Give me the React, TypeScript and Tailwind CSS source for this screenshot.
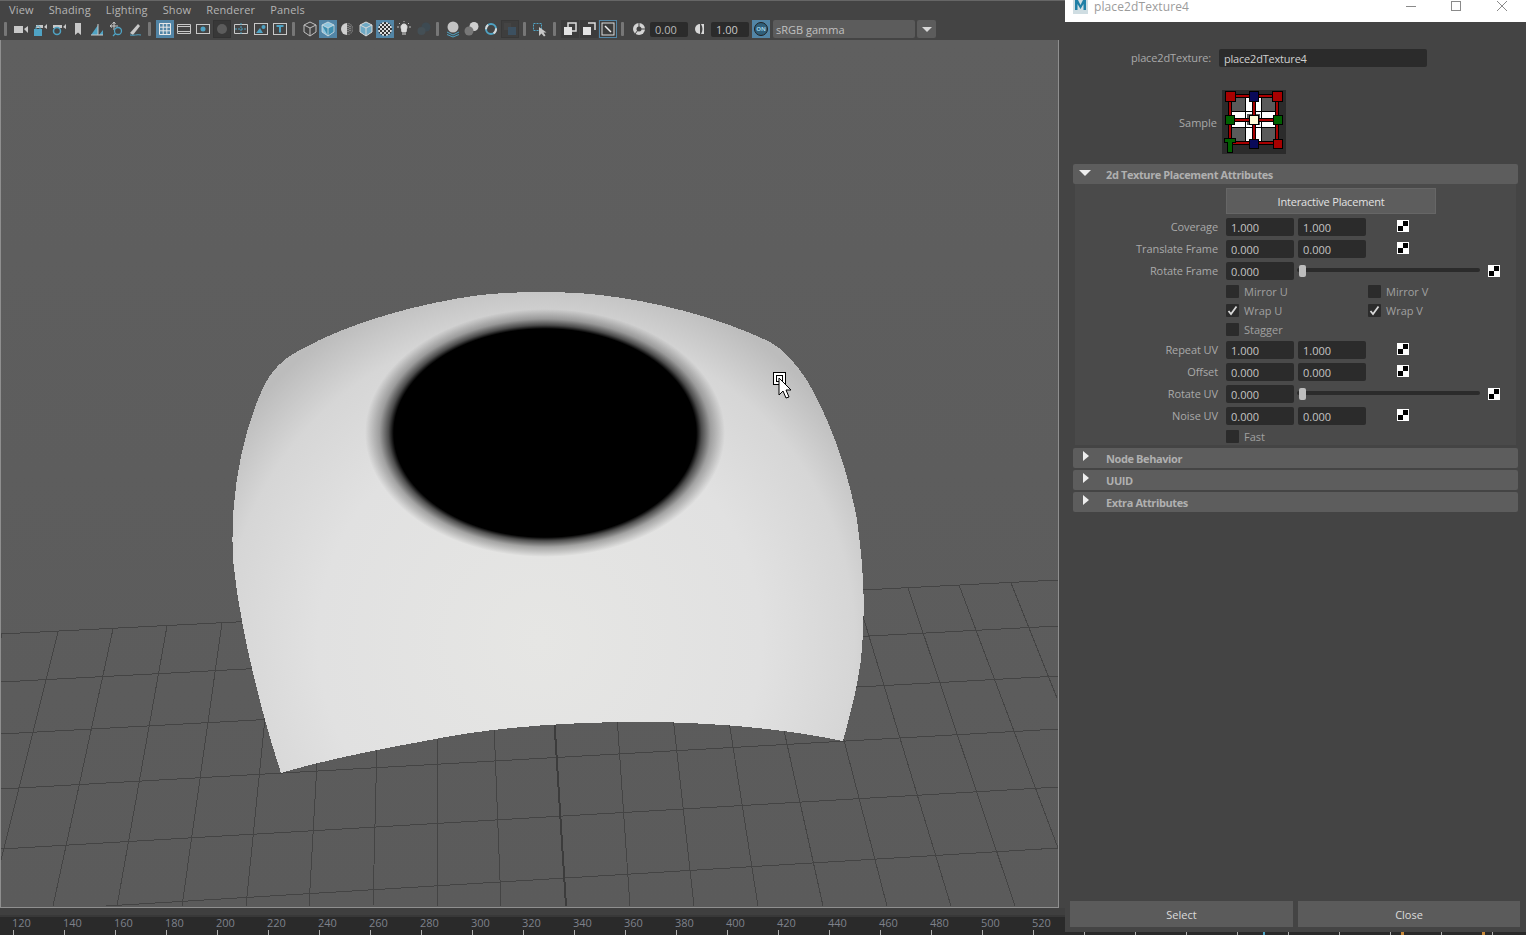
import React from "react";

const menus = ["View", "Shading", "Lighting", "Show", "Renderer", "Panels"];
const frames = Array.from({ length: 30 }, (_, i) => 120 + i * 20);

// grid lines read off the viewport: x1 y1 x2 y2
const gridLines = [
  [1, 634, 1058, 580], [1, 682, 1058, 626], [1, 734, 1058, 676], [1, 789, 1058, 729],
  [1, 849, 1058, 787], [106, 906, 1058, 848],
  [2, 634, 1, 638], [58, 632, 1, 860], [113, 629, 53, 906], [167, 626, 117, 906],
  [222, 623, 182, 906], [275, 620, 246, 906], [325, 620, 309, 906], [380, 620, 373, 906],
  [437, 620, 437, 906], [490, 620, 501, 906], [609, 600, 630, 906], [660, 600, 694, 906],
  [710, 600, 758, 906], [755, 600, 823, 906], [805, 590, 887, 906], [855, 590, 951, 906],
  [908, 588, 1015, 906], [959, 585, 1058, 848], [1011, 583, 1057, 698],
];

const Sep = ({ className }: { className: string }) => (
  <div className={`w-[3px] h-[14px] bg-[#777] rounded-[1px] shrink-0 ${className}`} />
);

const Tool = ({ className = "", children }: { className?: string; children: React.ReactNode }) => (
  <div className={`w-[18px] h-[18px] shrink-0 flex items-center justify-center ${className}`}>
    <svg width="18" height="18" viewBox="0 0 18 18" fill="none" className="shrink-0">{children}</svg>
  </div>
);

const Checker = ({ className = "" }: { className?: string }) => (
  <svg width="12" height="12" viewBox="0 0 12 12" className={`shrink-0 ${className}`}>
    <rect width="12" height="12" fill="#fff" />
    <rect x="6" y="1" width="5" height="5" fill="#000" />
    <rect x="1" y="6" width="5" height="5" fill="#000" />
  </svg>
);

const Field = ({ value, className = "" }: { value: string; className?: string }) => (
  <div className={`w-[68px] h-[18px] bg-[#2b2b2b] rounded-[2px] pl-[5px] pt-[1px] text-[#c4c4c4] leading-[18px] shrink-0 ${className}`}>
    {value}
  </div>
);

const Label = ({ text }: { text: string }) => (
  <div className="w-[143px] text-right text-[#a9a9a9] leading-[17px] tracking-[-0.08px] shrink-0">{text}</div>
);

const PairRow = ({ label, a, b, className = "" }: { label: string; a: string; b: string; className?: string }) => (
  <div className={`flex h-[18px] ${className}`}>
    <Label text={label} />
    <Field value={a} className="ml-[8px]" />
    <Field value={b} className="ml-[4px]" />
    <Checker className="ml-[31px] mt-[2px]" />
  </div>
);

const SliderRow = ({ label, value, className = "" }: { label: string; value: string; className?: string }) => (
  <div className={`flex h-[18px] ${className}`}>
    <Label text={label} />
    <Field value={value} className="ml-[8px]" />
    <div className="relative ml-[3px] mt-[6px] w-[183px] h-[4px] bg-[#2b2b2b] rounded-[2px] shrink-0">
      <div className="absolute left-[2px] top-[-3px] w-[7px] h-[12px] bg-[#bdbdbd] rounded-[2px]" />
    </div>
    <Checker className="ml-[8px] mt-[3px]" />
  </div>
);

const Check = ({ label, on, className = "" }: { label: string; on?: boolean; className?: string }) => (
  <div className={`flex items-center h-[13px] ${className}`}>
    <div className="w-[13px] h-[13px] bg-[#2b2b2b] rounded-[1px] shrink-0 flex items-center justify-center">
      {on && (
        <svg width="11" height="11" viewBox="0 0 11 11" fill="none">
          <path d="M1.5 6 L4 9 L9.5 1.5" stroke="#d8d8d8" strokeWidth="1.8" />
        </svg>
      )}
    </div>
    <span className="ml-[5px] text-[#a0a0a0] leading-[13px]">{label}</span>
  </div>
);

const Header = ({ title, open, className = "" }: { title: string; open?: boolean; className?: string }) => (
  <div className={`relative h-[20px] bg-[#5d5d5d] rounded-[2px] flex items-center pl-[33px] font-bold text-[#b0b0b0] tracking-[-0.4px] ${className}`}>
    {open ? (
      <div className="absolute left-[6px] top-[6px] w-0 h-0 border-l-[6.5px] border-r-[6.5px] border-t-[6px] border-l-transparent border-r-transparent border-t-[#eeeeee]" />
    ) : (
      <div className="absolute left-[10px] top-[3px] w-0 h-0 border-t-[5.5px] border-b-[5.5px] border-l-[6px] border-t-transparent border-b-transparent border-l-[#eeeeee]" />
    )}
    <span className="mt-[2px]">{title}</span>
  </div>
);

const Sample = () => (
  <svg width="64" height="64" viewBox="0 0 64 64" className="ml-[5px] shrink-0" shapeRendering="crispEdges">
    <rect width="64" height="64" fill="#2b2b2b" />
    <rect x="8" y="6" width="47" height="47" fill="#5a5a5a" />
    <rect x="23" y="7" width="17" height="45" fill="#fff" />
    <rect x="9" y="21" width="45" height="17" fill="#fff" />
    <rect x="25" y="24" width="13" height="11" fill="#5a5a5a" />
    <path d="M23.5 7V52M39.5 7V52M9 21.5H54M9 37.5H54" stroke="#000" />
    <path d="M8 6H55V53H8ZM31.5 6V53M8 29.5H55" stroke="#000" strokeWidth="4" fill="none" />
    <path d="M8 6H55V53H8ZM31.5 6V53M8 29.5H55" stroke="#a80000" strokeWidth="2" fill="none" />
    <rect x="3.5" y="1.5" width="10" height="10" fill="#a80000" stroke="#000" />
    <rect x="27" y="1.5" width="9" height="10" fill="#0a0a5a" stroke="#000" />
    <rect x="50.5" y="1.5" width="10" height="10" fill="#a80000" stroke="#000" />
    <rect x="3.5" y="25" width="9" height="9" fill="#006000" stroke="#000" />
    <rect x="27" y="25.5" width="9" height="9" fill="#fffbd8" stroke="#000" />
    <rect x="51" y="25" width="9" height="9" fill="#006000" stroke="#000" />
    <rect x="51" y="49" width="9" height="9" fill="#a80000" stroke="#000" />
    <rect x="27" y="49" width="9" height="9" fill="#0a0a5a" stroke="#000" />
    <path d="M2.5 48.5H13.5V52.5H10.5V62.5H5.5V52.5H2.5Z" fill="#006000" stroke="#000" />
  </svg>
);

const Viewport = () => (
  <svg width="1057" height="867" viewBox="1 40 1057 867" className="block">
    <defs>
      <linearGradient id="bg" x1="0" y1="0" x2="0" y2="1">
        <stop offset="0" stopColor="#5f5f5f" />
        <stop offset="1" stopColor="#5b5b5b" />
      </linearGradient>
      <radialGradient id="mesh" gradientUnits="userSpaceOnUse" cx="540" cy="640" r="370">
        <stop offset="0" stopColor="#e6e6e4" />
        <stop offset="0.6" stopColor="#e1e1e1" />
        <stop offset="0.85" stopColor="#d6d6d6" />
        <stop offset="1" stopColor="#bcbcbc" />
      </radialGradient>
      <radialGradient id="pupil">
        <stop offset="0" stopColor="#000" />
        <stop offset="0.84" stopColor="#000" />
        <stop offset="0.87" stopColor="#000" stopOpacity="0.65" />
        <stop offset="0.92" stopColor="#000" stopOpacity="0.28" />
        <stop offset="1" stopColor="#000" stopOpacity="0" />
      </radialGradient>
    </defs>
    <rect x="1" y="40" width="1057" height="867" fill="url(#bg)" />
    <g shapeRendering="crispEdges">
      {gridLines.map((l, i) => (
        <line key={i} x1={l[0]} y1={l[1]} x2={l[2]} y2={l[3]} stroke="#444" strokeWidth="1" />
      ))}
      <line x1="548" y1="620" x2="566" y2="906" stroke="#3c3c3c" strokeWidth="2" />
      <path
        d="M281 773 C262 715 240 630 233 560 C230 500 240 440 262 390 C272 368 285 358 300 350 C350 322 420 303 480 295 C520 291 565 291 600 295 C660 302 720 318 770 342 C785 350 797 365 808 382 C830 420 848 470 857 520 C864 570 866 610 861 660 C857 690 850 715 843 741 C790 730 720 722 640 722 C560 722 490 728 430 740 C375 750 325 760 281 773Z"
        fill="url(#mesh)"
      />
    </g>
    <ellipse cx="545" cy="433" rx="180" ry="124" fill="url(#pupil)" />
    <rect x="773.5" y="372.5" width="12" height="12" fill="#fff" stroke="#000" />
    <rect x="776.5" y="375.5" width="6" height="6" fill="#fff" stroke="#000" />
    <path d="M779 378 V395 L783 391 L786 398 L789 397 L786 390 L791 390 Z" fill="#fff" stroke="#000" />
  </svg>
);

const App: React.FC = () => {
  return (
    <div className="relative w-[1526px] h-[935px] overflow-hidden bg-[#444444] font-['Open_Sans',sans-serif] text-[11px]">
      <div className="h-[1px] bg-[#666]" />
      <div className="flex h-[19px] items-center pl-[9px] gap-[15px] text-[#b4b4b4] tracking-[0.15px]">
        {menus.map((m) => (
          <span key={m}>{m}</span>
        ))}
      </div>
      {/* toolbar */}
      <div className="flex h-[20px] items-center pb-[2px]">
        <Sep className="ml-[4px]" />
        <Tool className="ml-[5px]"><path d="M2 6H11V13H2ZM12 9L16 6V13Z" fill="#c8c8c8" /></Tool>
        <Tool className="ml-[1px]"><path d="M5 5H12V8H5ZM13 7L16 4V9Z" fill="#c8c8c8" /><rect x="3" y="9" width="8" height="7" fill="#4fa3c4" /><path d="M5 9V7.5C5 5.5 9 5.5 9 7.5V9" stroke="#4fa3c4" /></Tool>
        <Tool className="ml-[1px]"><path d="M3 5H12V8H3ZM13 7L16 4V9Z" fill="#c8c8c8" /><circle cx="7" cy="11" r="3.5" stroke="#4fa3c4" strokeWidth="1.5" /></Tool>
        <Tool className="ml-[1px]"><path d="M6 3H12V15L9 12.5L6 15Z" fill="#c8c8c8" /></Tool>
        <Tool className="ml-[1px]"><path d="M3 15L10 5V15ZM11 15L15 10V15Z" fill="#4fa3c4" /><path d="M3 15H15M10 4V15" stroke="#c8c8c8" /></Tool>
        <Tool className="ml-[1px]"><path d="M7 2V10M3 6H11M7 2L5.5 4M7 2L8.5 4M3 6L5 4.5M3 6L5 7.5" stroke="#c8c8c8" /><circle cx="11" cy="11" r="3.5" stroke="#4fa3c4" strokeWidth="1.3" /><path d="M8.5 13.5L6 16" stroke="#4fa3c4" strokeWidth="1.3" /></Tool>
        <Tool className="ml-[1px]"><path d="M4 13L12 4L14 6L7 15Z" fill="#c8c8c8" /><path d="M4 15C8 16 11 14 15 15" stroke="#4fa3c4" /></Tool>
        <Sep className="ml-[4px]" />
        <Tool className="ml-[5px] bg-[#5285a6]"><path d="M3.5 3.5H14.5V14.5H3.5ZM7.2 3.5V14.5M10.8 3.5V14.5M3.5 7.2H14.5M3.5 10.8H14.5" stroke="#e8e8e8" /></Tool>
        <Tool className="ml-[1px]"><path d="M2.5 4.5H15.5V13.5H2.5ZM2.5 6.5H15.5M2.5 11.5H15.5" stroke="#c8c8c8" /></Tool>
        <Tool className="ml-[1px]"><rect x="2.5" y="4.5" width="13" height="9" stroke="#c8c8c8" /><circle cx="9" cy="9" r="2.5" fill="#4fa3c4" /></Tool>
        <Tool className="ml-[1px] bg-[#383838] border border-[#333]"><circle cx="9" cy="9" r="5" fill="#5c5c5c" /></Tool>
        <Tool className="ml-[1px]"><path d="M2.5 4.5H15.5V13.5H2.5Z" stroke="#c8c8c8" /><path d="M9 3V15M3 9H15" stroke="#4fa3c4" strokeDasharray="2 1" /></Tool>
        <Tool className="ml-[2px]"><rect x="2.5" y="3.5" width="13" height="11" stroke="#c8c8c8" /><path d="M4 13L8 8L11 13Z" fill="#4fa3c4" /><circle cx="11.5" cy="7" r="2" fill="#4fa3c4" /></Tool>
        <Tool className="ml-[1px]"><rect x="2.5" y="3.5" width="13" height="11" stroke="#c8c8c8" /><path d="M5.5 6H12.5M9 6V12.5" stroke="#4fa3c4" strokeWidth="2" /></Tool>
        <Sep className="ml-[3px]" />
        <Tool className="ml-[6px]"><path d="M9 2L15 5V12L9 16L3 12V5ZM3 5L9 8L15 5M9 8V16" stroke="#c0c0c0" /></Tool>
        <Tool className="bg-[#5285a6]"><path d="M9 2L15 5V12L9 16L3 12V5Z" fill="#8cc4de" /><path d="M3 5L9 8L15 5V12L9 16Z" fill="#3f8fb0" /><path d="M9 2L15 5V12L9 16L3 12V5ZM3 5L9 8L15 5M9 8V16" stroke="#e4e4e4" strokeWidth="0.7" /></Tool>
        <Tool className="ml-[1px]"><circle cx="9" cy="9" r="6" fill="#d0d0d0" /><path d="M9 3A6 6 0 0 1 9 15Z" fill="#555" /><path d="M10 5V13M12 6V12" stroke="#aaa" strokeDasharray="1 1" /></Tool>
        <Tool className="ml-[1px]"><path d="M9 2L15 5V12L9 16L3 12V5Z" fill="#6fa9c4" /><path d="M9 2L15 5V12L9 16L3 12V5ZM3 5L9 8L15 5M9 8V16" stroke="#d8d8d8" /></Tool>
        <Tool className="ml-[1px] bg-[#5285a6]"><defs><pattern id="ck" width="4" height="4" patternUnits="userSpaceOnUse"><rect width="4" height="4" fill="#333" /><rect width="2" height="2" fill="#ddd" /><rect x="2" y="2" width="2" height="2" fill="#ddd" /></pattern></defs><circle cx="9" cy="9" r="7" fill="url(#ck)" /></Tool>
        <Tool className="ml-[1px]"><path d="M6 7C6 3 12 3 12 7C12 9 11 10 11 12H7C7 10 6 9 6 7ZM7 14H11" fill="#dcdcdc" stroke="#dcdcdc" /><path d="M2 7H4M14 7H16M4 3L5 4M14 3L13 4M9 1V2" stroke="#bbb" /></Tool>
        <Tool className="ml-[2px]"><circle cx="11" cy="7" r="4.5" fill="#3d4a52" /><circle cx="6.5" cy="11" r="4" fill="#444f55" /></Tool>
        <Sep className="ml-[3px]" />
        <Tool className="ml-[5px]"><circle cx="9" cy="7" r="5.5" fill="#c4c4c4" /><path d="M3 12L9 15L15 12M3 14.5L9 17L15 14.5" stroke="#4fa3c4" /></Tool>
        <Tool className="ml-[1px]"><circle cx="11" cy="6.5" r="4.5" fill="#d0d0d0" /><circle cx="6" cy="11" r="4.5" fill="#777" /></Tool>
        <Tool className="ml-[1px]"><circle cx="9" cy="9" r="5" stroke="#4fa3c4" strokeWidth="2" /><circle cx="9" cy="9" r="5" stroke="#d8d8d8" strokeWidth="2" strokeDasharray="5 10" /></Tool>
        <Tool className="ml-[1px] bg-[#3e3e3e] border border-[#383838]"><rect x="3" y="3" width="7" height="7" fill="#444" /><rect x="7" y="7" width="8" height="8" fill="#3c5060" /></Tool>
        <Sep className="ml-[4px]" />
        <Tool className="ml-[5px]"><rect x="2.5" y="3.5" width="8" height="7" stroke="#4fa3c4" strokeDasharray="2 1" /><path d="M8 7V16L10.5 13.5L13 16.5L14.5 15.5L12.5 12.5H15.5Z" fill="#c8c8c8" /></Tool>
        <Sep className="ml-[4px]" />
        <Tool className="ml-[5px] bg-[#3c3c3c]"><rect x="7" y="3" width="8" height="8" stroke="#dcdcdc" strokeWidth="1.5" /><rect x="3" y="7" width="8" height="8" fill="#e4e4e4" /></Tool>
        <Tool className="ml-[1px] bg-[#3c3c3c]"><path d="M8 3H15V10" stroke="#dcdcdc" strokeWidth="1.5" /><rect x="3" y="7" width="8" height="8" fill="#e4e4e4" /></Tool>
        <Tool className="ml-[1px] border border-[#5285a6] bg-[#3c3c3c]"><rect x="3" y="3" width="12" height="12" stroke="#dcdcdc" /><path d="M6 6L12 12" stroke="#eee" strokeWidth="1.5" /></Tool>
        <Sep className="ml-[4px]" />
        <Tool className="ml-[6px]"><circle cx="9" cy="9" r="6" fill="#d4d4d4" /><circle cx="9" cy="9" r="2.5" fill="#444" /><path d="M9 3V7M15 9H11M5 14L8 10" stroke="#444" /></Tool>
        <div className="ml-[2px] w-[38px] h-[15px] bg-[#2b2b2b] rounded-[2px] text-[#b8b8b8] pl-[5px] leading-[16px] shrink-0">0.00</div>
        <Tool className="ml-[3px]"><path d="M9 4A5 5 0 0 0 9 14Z" fill="#d8d8d8" /><path d="M10 4H13V14H10C12 11 12 7 10 4Z" fill="#d8d8d8" /></Tool>
        <div className="ml-[2px] w-[38px] h-[15px] bg-[#2b2b2b] rounded-[2px] text-[#c8c8c8] pl-[5px] leading-[16px] shrink-0">1.00</div>
        <Tool className="ml-[3px] bg-[#5285a6]"><circle cx="9" cy="9" r="6.5" fill="#2f5f7a" stroke="#222" /><text x="9" y="11" fontSize="6" fontWeight="700" fill="#9fd0e6" textAnchor="middle">ON</text></Tool>
        <div className="ml-[3px] w-[142px] h-[18px] bg-[#5c5c5c] rounded-[2px] pl-[3px] text-[#c0c0c0] leading-[19px] shrink-0">sRGB gamma</div>
        <div className="ml-[2px] w-[19px] h-[18px] bg-[#5c5c5c] rounded-[2px] flex items-center justify-center shrink-0">
          <div className="w-0 h-0 border-l-[5px] border-r-[5px] border-t-[5px] border-l-transparent border-r-transparent border-t-[#d8d8d8]" />
        </div>
      </div>
      {/* viewport */}
      <div className="w-[1059px] h-[868px] border-x border-b border-[#8f8f8f]">
        <Viewport />
      </div>
      <div className="h-[9px] bg-[#3f3f3f] border-b-2 border-[#383838]" />
      {/* time slider */}
      <div className="h-[18px] bg-[#2a2a2a] flex pl-[13px]">
        {frames.map((f) => (
          <div key={f} className="w-[51px] shrink-0 flex flex-col justify-between h-full">
            <span className="text-[#7e818a] leading-[11px] -ml-[1px] text-[11px]">{f <= 520 ? f : ""}</span>
            <div className="w-[1px] h-[5px] bg-[#b0b0b0]" />
          </div>
        ))}
      </div>
      <div className="absolute left-[1263px] top-[932px] w-[2px] h-[3px] bg-[#4fa3c4]" />
      <div className="absolute left-[1401px] top-[932px] w-[3px] h-[3px] bg-[#c98a3a]" />
      <div className="absolute left-[1482px] top-[932px] w-[3px] h-[3px] bg-[#c98a3a]" />

      {/* floating attribute window */}
      <div className="absolute left-[1065px] top-0 w-[461px] h-[932px] bg-[#444444] flex flex-col">
        <div className="relative h-[22px] bg-white shrink-0 flex items-start">
          <svg width="15" height="14" viewBox="0 0 15 14" className="ml-[8px]">
            <rect width="15" height="14" fill="#cfdde2" />
            <path d="M2 10V0H5L7.5 5L10 0H13V10H10.5V4L7.5 9L4.5 4V10Z" fill="#1f7fa6" />
          </svg>
          <span className="ml-[6px] text-[12px] leading-[14px] text-[#9b9b9b] tracking-[0.1px]">place2dTexture4</span>
          <svg width="110" height="14" viewBox="0 0 110 14" className="absolute left-[341px] top-0" fill="none" stroke="#8a8a8a">
            <path d="M0 6.5H10" />
            <rect x="45.5" y="1.5" width="9" height="9" />
            <path d="M91 1L101 11M101 1L91 11" />
          </svg>
        </div>
        <div className="flex h-[18px] mt-[27px]">
          <div className="w-[146px] text-right text-[#a9a9a9] leading-[18px] tracking-[-0.15px]">place2dTexture:</div>
          <div className="ml-[8px] w-[208px] bg-[#2b2b2b] rounded-[2px] pl-[5px] text-[#d0d0d0] leading-[20px] tracking-[-0.2px]">place2dTexture4</div>
        </div>
        <div className="flex h-[64px] mt-[23px] items-center">
          <div className="w-[152px] text-right text-[#a9a9a9] mt-[2px]">Sample</div>
          <Sample />
        </div>
        <div className="mx-[8px] mt-[10px]">
          <Header title="2d Texture Placement Attributes" open />
          <div className="mx-[2px] h-[261px] bg-[#4a4a4a] pt-[4px]">
            <div className="ml-[151px] w-[210px] h-[26px] bg-[#5d5d5d] border border-[#666] text-[#e2e2e2] flex items-center justify-center pt-[2px] tracking-[-0.2px]">
              Interactive Placement
            </div>
            <PairRow className="mt-[4px]" label="Coverage" a="1.000" b="1.000" />
            <PairRow className="mt-[4px]" label="Translate Frame" a="0.000" b="0.000" />
            <SliderRow className="mt-[4px]" label="Rotate Frame" value="0.000" />
            <div className="flex ml-[151px] mt-[5px]">
              <Check className="w-[142px]" label="Mirror U" />
              <Check label="Mirror V" />
            </div>
            <div className="flex ml-[151px] mt-[6px]">
              <Check className="w-[142px]" label="Wrap U" on />
              <Check label="Wrap V" on />
            </div>
            <Check className="ml-[151px] mt-[6px]" label="Stagger" />
            <PairRow className="mt-[5px]" label="Repeat UV" a="1.000" b="1.000" />
            <PairRow className="mt-[4px]" label="Offset" a="0.000" b="0.000" />
            <SliderRow className="mt-[4px]" label="Rotate UV" value="0.000" />
            <PairRow className="mt-[4px]" label="Noise UV" a="0.000" b="0.000" />
            <Check className="ml-[151px] mt-[5px]" label="Fast" />
          </div>
          <Header className="mt-[3px]" title="Node Behavior" />
          <Header className="mt-[2px]" title="UUID" />
          <Header className="mt-[2px]" title="Extra Attributes" />
        </div>
        <div className="mt-auto mb-[5px] flex ml-[5px] gap-[5px] text-[#dcdcdc]">
          <div className="w-[223px] h-[26px] bg-[#5b5b5b] flex items-center justify-center pt-[2px]">Select</div>
          <div className="w-[222px] h-[26px] bg-[#5b5b5b] flex items-center justify-center pt-[2px]">Close</div>
        </div>
      </div>
    </div>
  );
};

export default App;
